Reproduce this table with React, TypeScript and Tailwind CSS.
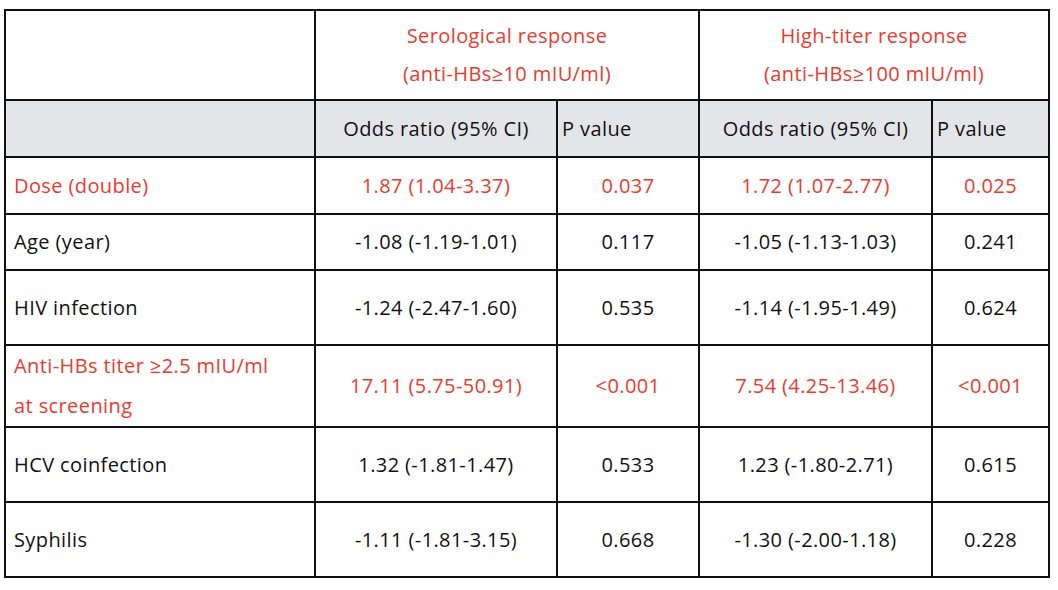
import React from 'react';

type Row = {
  label: string[];
  or1: string;
  p1: string;
  or2: string;
  p2: string;
  red?: boolean;
  h: string;
};

const rows: Row[] = [
  { label: ['Dose (double)'], or1: '1.87 (1.04-3.37)', p1: '0.037', or2: '1.72 (1.07-2.77)', p2: '0.025', red: true, h: 'h-[55px]' },
  { label: ['Age (year)'], or1: '-1.08 (-1.19-1.01)', p1: '0.117', or2: '-1.05 (-1.13-1.03)', p2: '0.241', h: 'h-[54px]' },
  { label: ['HIV infection'], or1: '-1.24 (-2.47-1.60)', p1: '0.535', or2: '-1.14 (-1.95-1.49)', p2: '0.624', h: 'h-[73px]' },
  {
    label: ['Anti-HBs titer ≥2.5 mIU/ml', 'at screening'],
    or1: '17.11 (5.75-50.91)',
    p1: '<0.001',
    or2: '7.54 (4.25-13.46)',
    p2: '<0.001',
    red: true,
    h: 'h-[80px]',
  },
  { label: ['HCV coinfection'], or1: '1.32 (-1.81-1.47)', p1: '0.533', or2: '1.23 (-1.80-2.71)', p2: '0.615', h: 'h-[73px]' },
  { label: ['Syphilis'], or1: '-1.11 (-1.81-3.15)', p1: '0.668', or2: '-1.30 (-2.00-1.18)', p2: '0.228', h: 'h-[73px]' },
];

export default function App() {
  return (
    <div className="w-[1058px] h-[590px] bg-white pt-[9px] pl-[4px] font-['Open_Sans',sans-serif] text-[20px] tracking-[0.4px] text-[#111]">
      {/* Table: grid with black gaps for the rules */}
      <div className="inline-grid grid-cols-[308px_240px_140px_231px_115px] gap-[2px] p-[2px] bg-[#111]">
        {/* Header row */}
        <div className="bg-white h-[88px]" />
        <div className="col-span-2 bg-white flex flex-col items-center justify-center leading-[38px] text-[#ea3b2f]">
          <span>Serological response</span>
          <span>(anti-HBs≥10 mIU/ml)</span>
        </div>
        <div className="col-span-2 bg-white flex flex-col items-center justify-center leading-[38px] text-[#ea3b2f]">
          <span>High-titer response</span>
          <span>(anti-HBs≥100 mIU/ml)</span>
        </div>

        {/* Sub header */}
        <div className="bg-[#e4e5e9] h-[55px]" />
        <div className="bg-[#e4e5e9] flex items-center justify-center">Odds ratio (95% CI)</div>
        <div className="bg-[#e4e5e9] flex items-center pl-[4px]">P value</div>
        <div className="bg-[#e4e5e9] flex items-center justify-center">Odds ratio (95% CI)</div>
        <div className="bg-[#e4e5e9] flex items-center pl-[4px]">P value</div>

        {/* Body */}
        {rows.map((r) => {
          const color = r.red ? 'text-[#ea3b2f]' : '';
          return (
            <React.Fragment key={r.label[0]}>
              <div className={`bg-white ${r.h} flex flex-col justify-center pl-[8px] leading-[40px] ${color}`}>
                {r.label.map((l) => (
                  <span key={l}>{l}</span>
                ))}
              </div>
              <div className={`bg-white flex items-center justify-center ${color}`}>{r.or1}</div>
              <div className={`bg-white flex items-center justify-center ${color}`}>{r.p1}</div>
              <div className={`bg-white flex items-center justify-center ${color}`}>{r.or2}</div>
              <div className={`bg-white flex items-center justify-center ${color}`}>{r.p2}</div>
            </React.Fragment>
          );
        })}
      </div>
    </div>
  );
}
